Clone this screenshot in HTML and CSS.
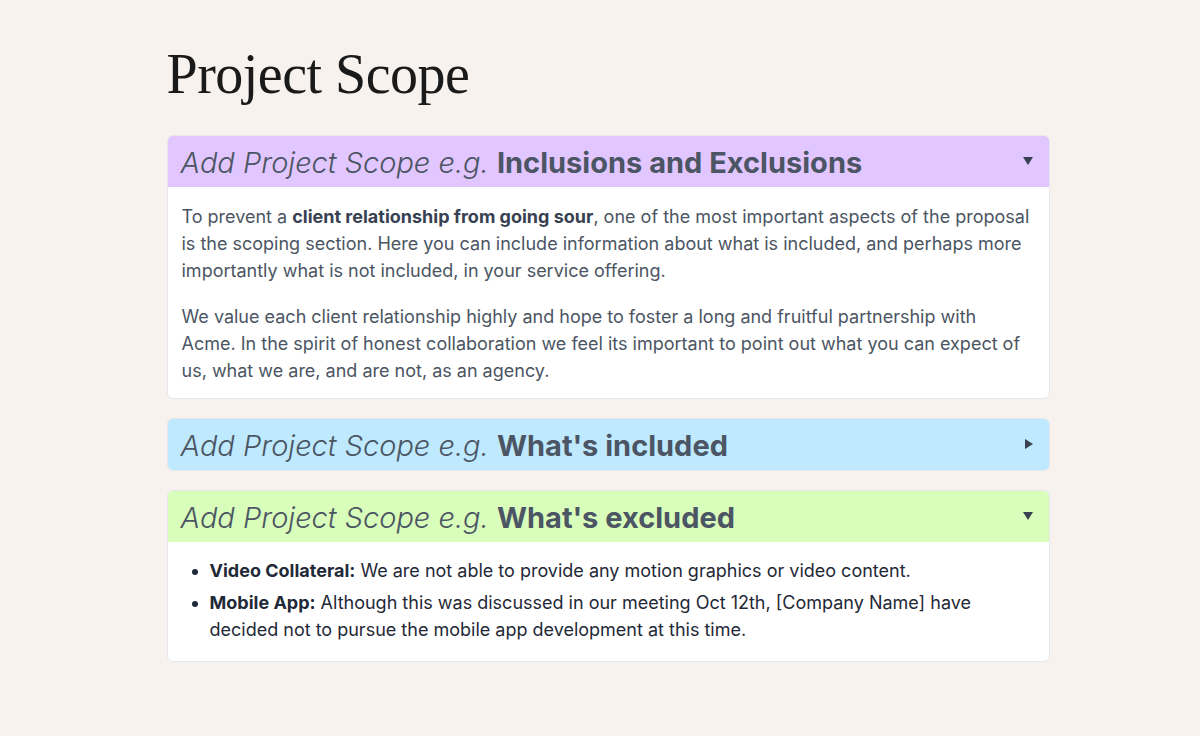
FILE: index.html
```html
<!DOCTYPE html>
<html>
<head>
    <title>Project Scope</title>
    <meta name="viewport" content="width=device-width, initial-scale=1.0">
    <link rel="stylesheet" href="styles.css">
</head>
<body>
    <main class="page">
        <h1 class="page-title">Project Scope</h1>

        <section class="scope-card open">
            <div class="scope-header purple">
                <span class="scope-title"><em>Add Project Scope e.g.</em> <strong>Inclusions and Exclusions</strong></span>
                <span class="caret down"></span>
            </div>
            <div class="scope-body">
                <p>To prevent a <strong>client relationship from going sour</strong>, one of the most important aspects of the proposal is the scoping section. Here you can include information about what is included, and perhaps more importantly what is not included, in your service offering.</p>
                <p>We value each client relationship highly and hope to foster a long and fruitful partnership with Acme. In the spirit of honest collaboration we feel its important to point out what you can expect of us, what we are, and are not, as an agency.</p>
            </div>
        </section>

        <section class="scope-card">
            <div class="scope-header blue">
                <span class="scope-title"><em>Add Project Scope e.g.</em> <strong>What's included</strong></span>
                <span class="caret right"></span>
            </div>
        </section>

        <section class="scope-card open">
            <div class="scope-header green">
                <span class="scope-title"><em>Add Project Scope e.g.</em> <strong>What's excluded</strong></span>
                <span class="caret down"></span>
            </div>
            <div class="scope-body">
                <ul>
                    <li><strong>Video Collateral:</strong> We are not able to provide any motion graphics or video content.</li>
                    <li><strong>Mobile App:</strong> Although this was discussed in our meeting Oct 12th, [Company Name] have decided not to pursue the mobile app development at this time.</li>
                </ul>
            </div>
        </section>
    </main>
</body>
</html>
```

FILE: styles.css
```css
* {
    box-sizing: border-box;
    margin: 0;
    padding: 0;
}

body {
    background-color: #f7f2ee;
    color: #4b5563;
    font-family: Inter, "Noto Sans", sans-serif;
    min-height: 100vh;
}

.page {
    width: 883px;
    margin: 0 auto;
    padding-top: 39px;
    transform: translateX(8px);
}

.page-title {
    font-family: "Liberation Serif", "DejaVu Serif", serif;
    font-weight: 400;
    font-size: 56px;
    line-height: 70px;
    color: #1a1a1a;
    letter-spacing: -0.5px;
    margin-bottom: 26px;
}

.scope-card {
    background: #fff;
    border: 1px solid #e5e7eb;
    border-radius: 6px;
    overflow: hidden;
    margin-bottom: 19px;
}

.scope-header {
    height: 52px;
    display: flex;
    align-items: center;
    justify-content: space-between;
    padding: 0 17px 0 14px;
    margin: -1px -1px 0;
}

.scope-header.purple { background: #e2c6ff; }
.scope-header.blue { background: #bee9fe; }
.scope-header.green { background: #d9fdba; }

.scope-title {
    font-size: 29px;
    color: #4b5563;
    white-space: nowrap;
    position: relative;
    top: 1px;
}

.scope-title em {
    font-weight: 300;
}

.scope-title strong {
    font-weight: 700;
}

.caret {
    width: 0;
    height: 0;
    border-style: solid;
    border-color: transparent;
}

.caret.down {
    border-width: 8px 5px 0 5px;
    border-top-color: #374151;
}

.caret.right {
    border-width: 5px 0 5px 8px;
    border-left-color: #374151;
}

.scope-body {
    padding: 16px 14px 14px;
    font-size: 18px;
    line-height: 27px;
}

.scope-body p + p {
    margin-top: 19px;
}

.scope-body strong {
    font-weight: 700;
    color: #374151;
}

.scope-body ul {
    padding-left: 28px;
    color: #1f2937;
    margin-top: -1px;
    padding-bottom: 4px;
}

.scope-body li + li {
    margin-top: 5px;
}

.scope-body li strong {
    color: #1f2937;
}
```
